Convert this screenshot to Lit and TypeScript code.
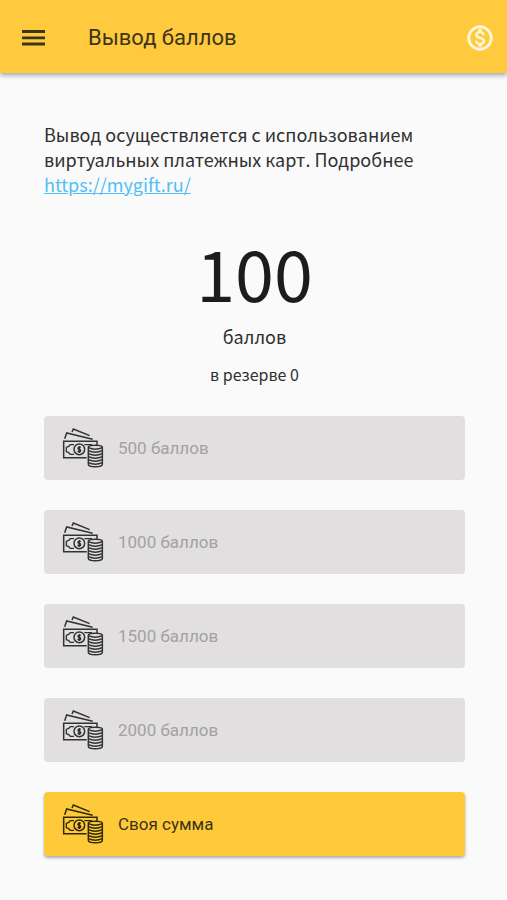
import { LitElement, html, css } from "lit";
import { customElement } from "lit/decorators.js";

@customElement("money-icon")
class MoneyIcon extends LitElement {
  static styles = css`
    :host { display: block; flex: none; width: 42px; height: 42px; }
    svg { display: block; width: 100%; height: 100%; }
  `;

  render() {
    return html`<svg viewBox="0 0 126 126" fill="none" stroke="currentColor" stroke-width="4.5" aria-hidden="true">
      <path d="M30 15L34 6L83 26M8 35L14 18L92 37" />
      <path d="M74 92H5V43H105V54" />
      <path d="M36 53H25Q21 60 13 61V74Q21 76 25 82H36M67 53H88V56" stroke-width="4" />
      <circle cx="52" cy="67" r="16" />
      <path d="M56 62Q52 59 49 62Q47 66 52 67Q57 69 55 73Q51 76 47 72M52 57V78" stroke-width="5" />
      <path d="M79 61V112C79 122 121 122 121 112V61C121 53 79 53 79 61Z" />
      <path d="M79 62Q100 71 121 62M79 71Q100 80 121 71M79 80Q100 89 121 80M79 89Q100 98 121 89M79 98Q100 107 121 98M79 107Q100 116 121 107" />
    </svg>`;
  }
}

@customElement("amount-button")
class AmountButton extends LitElement {
  static properties = { label: { type: String }, disabled: { type: Boolean } };
  declare label: string;
  declare disabled: boolean;

  static styles = css`
    :host { display: block; }
    button {
      display: flex;
      align-items: center;
      gap: 14px;
      width: 100%;
      height: 64px;
      padding: 0 18px;
      border: 0;
      border-radius: 4px;
      background: #ffca3a;
      color: #3b3313;
      font: 17px/24px Roboto, sans-serif;
      text-align: left;
      box-shadow: 0 2px 3px rgba(70, 80, 90, 0.45);
      cursor: pointer;
    }
    button:disabled {
      background: #e1dfe0;
      color: #a3a1a2;
      box-shadow: none;
      cursor: default;
    }
    money-icon { color: #302908; }
    button:disabled money-icon { color: #343334; }
  `;

  render() {
    return html`<button type="button" ?disabled=${this.disabled}>
      <money-icon></money-icon><span>${this.label}</span>
    </button>`;
  }
}

@customElement("app-root")
class AppRoot extends LitElement {
  private amounts = [500, 1000, 1500, 2000];

  static styles = css`
    :host {
      display: block;
      min-height: 100vh;
      background: #fafafa;
      color: #303030;
      font-family: "Noto Sans CJK SC", "Noto Sans", sans-serif;
    }
    header {
      display: flex;
      align-items: center;
      height: 73px;
      padding: 3px 12px 0 20px;
      box-sizing: border-box;
      background: #ffca3e;
      color: #3d3517;
      box-shadow: 0 2px 5px rgba(60, 70, 80, 0.5);
    }
    .icon-button {
      display: block;
      flex: none;
      padding: 0;
      border: 0;
      background: none;
      color: inherit;
      cursor: pointer;
    }
    .icon-button svg { display: block; }
    .balance { color: #fff7df; }
    h1 {
      flex: 1;
      margin: 0 0 0 40px;
      font: 400 22px/32px Roboto, sans-serif;
    }
    main { padding: 49px 42px 44px 44px; }
    .intro { margin: 0; font-size: 18px; line-height: 25px; }
    a { color: #4fc0f5; text-decoration: underline; }
    .summary { padding: 28px 0 30px; text-align: center; }
    .summary p { margin: 0; }
    .summary .points { font-size: 70px; line-height: 94px; color: #1c1c1c; }
    .summary .unit { margin-top: 5px; font-size: 18px; line-height: 24px; }
    .summary .reserve { margin-top: 14px; font-size: 16px; line-height: 24px; }
    .amounts { display: grid; gap: 30px; }
  `;

  render() {
    return html`
      <header>
        <button class="icon-button" type="button" aria-label="Меню">
          <svg width="28" height="28" viewBox="0 0 28 28" stroke="currentColor" stroke-width="2.8">
            <path d="M2 7.500H25M2 13.800H25M2 20H25" />
          </svg>
        </button>
        <h1>Вывод баллов</h1>
        <button class="icon-button balance" type="button" aria-label="Баланс">
          <svg width="30" height="30" viewBox="0 0 24 24" fill="currentColor" stroke="currentColor" stroke-width="0.3">
            <path d="M12 2C6.480 2 2 6.480 2 12s4.480 10 10 10 10-4.480 10-10S17.520 2 12 2zm0 18c-4.410 0-8-3.590-8-8s3.590-8 8-8 8 3.590 8 8-3.590 8-8 8zm.31-8.860c-1.770-.45-2.340-.94-2.340-1.670 0-.84.79-1.430 2.100-1.430 1.380 0 1.900.66 1.940 1.640h1.710c-.05-1.340-.87-2.570-2.490-2.970V5H10.900v1.690c-1.510.32-2.720 1.300-2.720 2.810 0 1.790 1.490 2.690 3.660 3.210 1.950.46 2.340 1.150 2.340 1.870 0 .53-.39 1.390-2.100 1.390-1.600 0-2.230-.72-2.320-1.640H8.040c.1 1.700 1.360 2.660 2.860 2.970V19h2.340v-1.670c1.520-.29 2.720-1.160 2.730-2.770-.01-2.200-1.900-2.960-3.660-3.420z" />
          </svg>
        </button>
      </header>
      <main>
        <p class="intro">
          Вывод осуществляется с использованием виртуальных платежных карт. Подробнее
          <a href="https://mygift.ru/">https://mygift.ru/</a>
        </p>
        <section class="summary">
          <p class="points">100</p>
          <p class="unit">баллов</p>
          <p class="reserve">в резерве 0</p>
        </section>
        <div class="amounts">
          ${this.amounts.map((n) => html`<amount-button label="${n} баллов" disabled></amount-button>`)}
          <amount-button label="Своя сумма"></amount-button>
        </div>
      </main>
    `;
  }
}
